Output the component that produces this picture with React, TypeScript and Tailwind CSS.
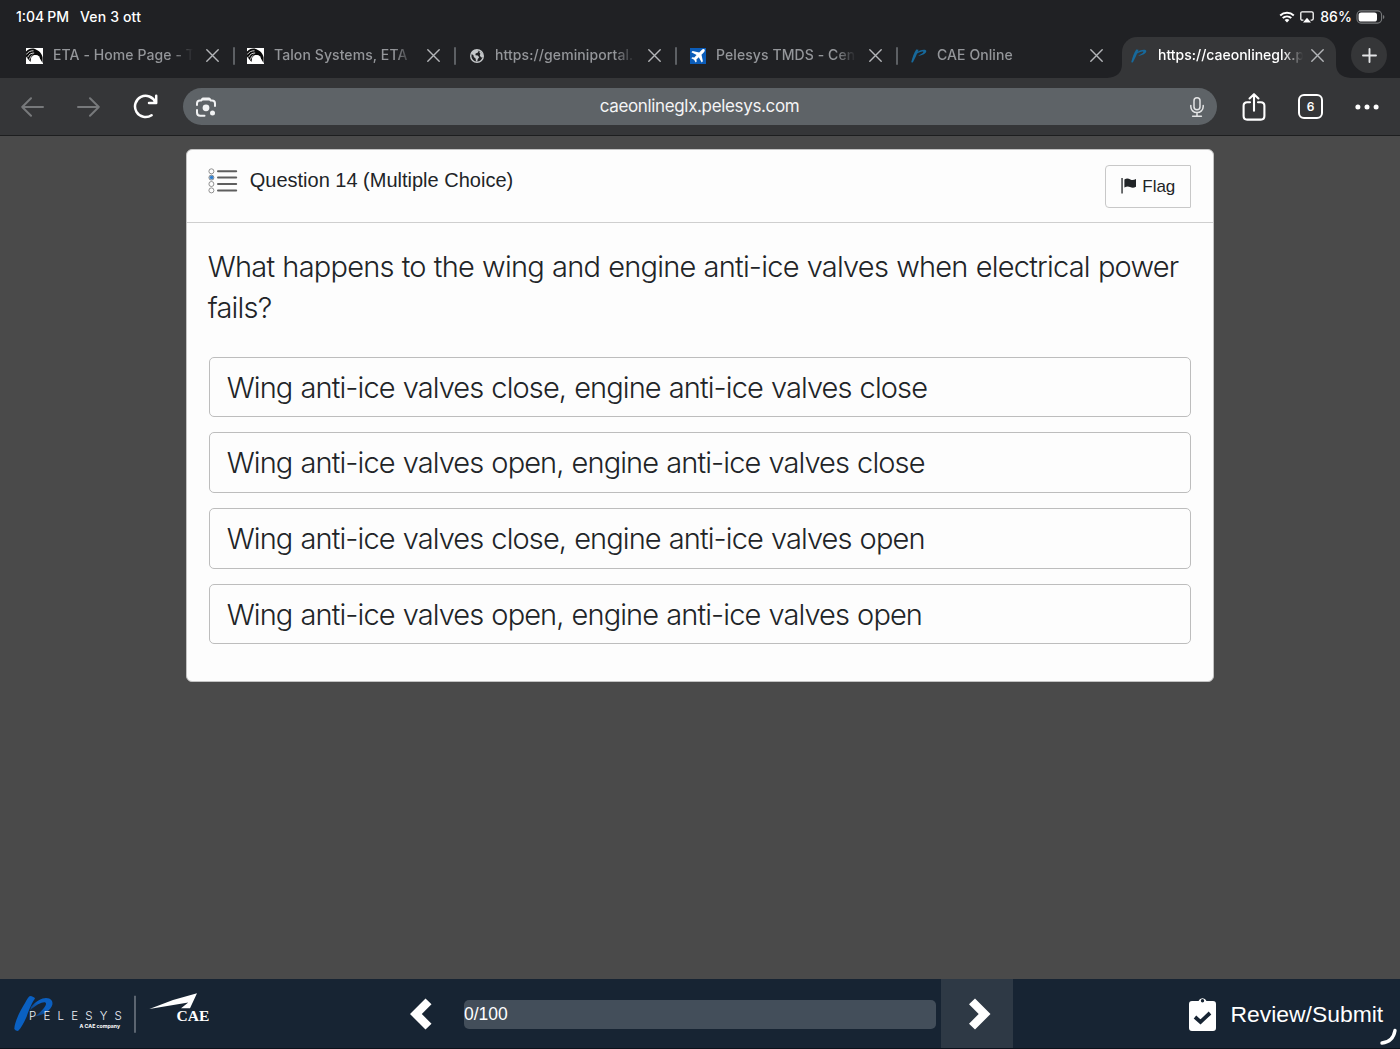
import React from "react";

type Tab = { title: string; icon: string };

const tabs: Tab[] = [
  { title: "ETA - Home Page - T", icon: "talon" },
  { title: "Talon Systems, ETA", icon: "talon" },
  { title: "https://geminiportal.", icon: "globe" },
  { title: "Pelesys TMDS - Cen", icon: "plane" },
  { title: "CAE Online", icon: "pel" },
];

const options = [
  "Wing anti-ice valves close, engine anti-ice valves close",
  "Wing anti-ice valves open, engine anti-ice valves close",
  "Wing anti-ice valves close, engine anti-ice valves open",
  "Wing anti-ice valves open, engine anti-ice valves open",
];

function Favicon({ kind }: { kind: string }) {
  if (kind === "talon")
    return (
      <svg width="17" height="16" viewBox="0 0 17 16" className="shrink-0">
        <rect width="17" height="16" fill="#fff" />
        <path d="M0 3.500C2.500 .8 6 0 9 1C13 2.500 16 5.500 16.600 9.500V15L14.500 11.500L11.500 7.800L8 7L5.200 9.500L4.500 14L2 11L0 8.500Z" fill="#0a0a0a" />
        <path d="M.3 6.500C2 4 4.500 2.600 7.500 2.800M1.600 9.300C3 6.300 5 5 8.200 5M3.500 11.500C4.200 9 5 8 6.500 7" stroke="#efefef" strokeWidth=".9" fill="none" />
        <circle cx="9.800" cy="11.300" r="4.300" fill="#fff" />
      </svg>
    );
  if (kind === "globe")
    return (
      <svg width="16" height="16" viewBox="0 0 16 16" className="shrink-0">
        <circle cx="8" cy="8" r="6.300" fill="#202124" stroke="#c4c7c9" strokeWidth="1.400" />
        <path d="M2.200 5.500C3.200 3 5.500 1.700 8 1.700L9.600 3.200 8.600 4.800 6.600 5.600 6.400 7.200 8.800 7.400 10.200 9.200 8.800 11 8.200 13.400 7 13.200 6.600 10.400 4.800 9 4.600 7.400Z" fill="#c4c7c9" />
        <path d="M11 2.800L14 6.400 14.100 9 12.200 9.600 10.800 7.600 11.400 5.800 10.400 4.600Z" fill="#c4c7c9" />
      </svg>
    );
  if (kind === "plane")
    return (
      <svg width="16" height="16" viewBox="0 0 16 16" className="shrink-0">
        <rect width="16" height="16" fill="#0b5cb8" />
        <path d="M14.500 1.400C13.600.7 12.300 1.300 11.400 2.200L9.200 4.400 2.600 3 1.400 4.200 6.600 7.100 4.300 9.500 2.300 9.200 1.300 10.200 4.100 11.800 5.700 14.600 6.700 13.600 6.400 11.600 8.800 9.300 11.700 14.500 12.900 13.300 11.500 6.700 13.700 4.500C14.600 3.600 15.200 2.200 14.500 1.400Z" fill="#fff" />
      </svg>
    );
  return (
    <svg width="16" height="16" viewBox="0 0 16 16" className="shrink-0">
      <path d="M.2 14.200C1.400 9.500 3 5 5.200 1.600L7.600 1.800C6 6 4 10.500 1.800 14.600Z" fill="#17699b" />
      <path d="M5.500 4.500C8.500 1.500 15.200 .6 15.300 3C15.300 5.400 11.500 7.400 7 8C9.500 6.600 12.500 4.800 12.400 3.800C12.200 3 8.500 3.400 5 6.400Z" fill="#17699b" />
    </svg>
  );
}

function Close() {
  return (
    <svg width="13" height="13" viewBox="0 0 13 13" className="shrink-0" fill="none" stroke="#b3b5b8" strokeWidth="1.400" strokeLinecap="round">
      <path d="M.8.8L12.200 12.200M12.200.8L.8 12.200" />
    </svg>
  );
}

function StatusBar() {
  return (
    <div className="flex h-[33px] items-center justify-between pl-4 pr-[15px] text-[14px] font-medium leading-none text-white">
      <div className="flex gap-[11px]">
        <span>
          1:04<span className="ml-[3px]">PM</span>
        </span>
        <span className="tracking-[0.15px]">Ven 3 ott</span>
      </div>
      <div className="flex items-center">
        <svg width="16" height="12" viewBox="0 0 16 12" fill="none" stroke="#fff" strokeWidth="2">
          <path d="M1.200 4.400C5 .9 11 .9 14.800 4.400M3.700 7.100C6.200 4.900 9.800 4.900 12.300 7.100" />
          <path d="M5.600 8.900C7 7.700 9 7.700 10.400 8.900L8 11.400Z" fill="#fff" stroke="none" />
        </svg>
        <svg width="14" height="12" viewBox="0 0 14 12" className="ml-[5px]">
          <path d="M3.400 9.200H2.200Q.8 9.200.8 7.800V2.200Q.8.8 2.200.8H11.800Q13.200.8 13.200 2.200V7.800Q13.200 9.200 11.800 9.200H10.600" fill="none" stroke="#fff" strokeWidth="1.300" />
          <path d="M7 6.800L11 11.400H3Z" fill="#fff" />
        </svg>
        <span className="ml-[6px] text-[14px] tracking-[0.1px]">86%</span>
        <svg width="29" height="14" viewBox="0 0 29 14" className="ml-1">
          <rect x="1" y=".9" width="24.600" height="12.200" rx="4" fill="none" stroke="#77797b" strokeWidth="1.100" />
          <rect x="2.600" y="2.500" width="18.400" height="9" rx="2.600" fill="#fff" />
          <path d="M27 5V9Q28.400 8.400 28.400 7T27 5Z" fill="#77797b" />
        </svg>
      </div>
    </div>
  );
}

function TabStrip() {
  return (
    <div className="flex h-[45px] items-start pl-[26px]">
      {tabs.map((t, i) => (
        <div key={t.title} className={i === 4 ? "flex h-[45px] w-[212px] shrink-0 items-center" : "flex h-[45px] w-[221px] shrink-0 items-center"}>
          <div className="flex w-[17px] justify-center">
            <Favicon kind={t.icon} />
          </div>
          <span className="ml-[10px] mt-[-2px] w-[143px] whitespace-nowrap text-[14px] font-medium tracking-[0.09px] text-[#94969a] [mask-image:linear-gradient(to_right,black_84%,transparent_98%)]">
            {t.title}
          </span>
          <div className="ml-[10px]">
            <Close />
          </div>
          {i < 4 && <div className="ml-[14px] h-[18px] w-[2px] rounded bg-[#5d6064]" />}
        </div>
      ))}
      <div className="relative mt-[4px] flex h-[41px] w-[214px] shrink-0 items-center rounded-t-[15px] bg-[#353638] pl-[9px]">
        <svg width="16" height="14" viewBox="0 0 16 14" className="absolute bottom-0 left-[-15px]">
          <path d="M16 0V14H0Q15 13 15 0Z" fill="#353638" />
        </svg>
        <svg width="16" height="14" viewBox="0 0 16 14" className="absolute bottom-0 right-[-15px]">
          <path d="M0 0V14H16Q1 13 1 0Z" fill="#353638" />
        </svg>
        <div className="mt-[-4px] flex items-center">
          <Favicon kind="pel" />
          <span className="ml-[11px] mt-[-2px] w-[148px] whitespace-nowrap text-[14px] font-medium tracking-[0px] text-white [mask-image:linear-gradient(to_right,black_84%,transparent_98%)]">
            https://caeonlineglx.p
          </span>
          <div className="ml-[5px]">
            <Close />
          </div>
        </div>
      </div>
      <div className="ml-[15px] mt-[4px] flex size-9 shrink-0 items-center justify-center rounded-full bg-[#353638]">
        <svg width="15" height="15" viewBox="0 0 15 15" stroke="#e3e4e6" strokeWidth="1.900" strokeLinecap="round">
          <path d="M7.500 1V14M1 7.500H14" />
        </svg>
      </div>
    </div>
  );
}

function Toolbar() {
  return (
    <div className="flex h-[58px] items-center border-b border-[#1d1e1f] bg-[#353638] pl-[21px]">
      <svg width="23" height="20" viewBox="0 0 23 20" fill="none" stroke="#77797b" strokeWidth="2" strokeLinecap="round" strokeLinejoin="round">
        <path d="M22 10H1.200M10 1.200L1.200 10L10 18.800" />
      </svg>
      <svg width="23" height="20" viewBox="0 0 23 20" className="ml-[33px]" fill="none" stroke="#77797b" strokeWidth="2" strokeLinecap="round" strokeLinejoin="round">
        <path d="M1 10H21.800M13 1.200L21.800 10L13 18.800" />
      </svg>
      <svg width="25" height="25" viewBox="0 0 25 25" className="ml-[33px]" fill="none" stroke="#fff" strokeWidth="2.500" strokeLinecap="round" strokeLinejoin="round">
        <path d="M18.600 21.200A10.600 10.600 0 1 1 22.400 8.400M23.200 1.800V9H16" />
      </svg>
      <div className="ml-[25px] flex h-[37px] w-[1034px] items-center justify-between rounded-full bg-[#5e6367] px-[13px]">
        <svg width="20" height="20" viewBox="0 0 20 20" fill="none" stroke="#f1f2f3" strokeWidth="2" strokeLinecap="round">
          <path d="M1 8V6.500Q1 3.500 4 3.500H5.200L7 1.400H13L14.800 3.500H16Q19 3.500 19 6.500V9M1 13V15.500Q1 18.800 4.300 18.800H8.500" />
          <path d="M6.600 2.200H13.400" strokeWidth="2.600" />
          <circle cx="10" cy="10.800" r="3.400" fill="#f1f2f3" stroke="none" />
          <circle cx="16.500" cy="16" r="2.500" fill="#f1f2f3" stroke="none" />
        </svg>
        <span className="ml-[-7px] text-[17px] leading-none tracking-[-0.35px] text-[#f4f4f5]">caeonlineglx.pelesys.com</span>
        <svg width="14" height="20" viewBox="0 0 14 20" fill="none" stroke="#e3e4e5" strokeWidth="1.500" strokeLinecap="round">
          <rect x="4" y=".8" width="6" height="12" rx="3" />
          <path d="M.8 8.500V9.500C.8 13 3.500 15.600 7 15.600S13.200 13 13.200 9.500V8.500M7 15.600V19M2.600 19.200H11.400" />
        </svg>
      </div>
      <svg width="24" height="28" viewBox="0 0 24 28" className="ml-[25px]" fill="none" stroke="#fff" strokeWidth="2.100" strokeLinecap="round" strokeLinejoin="round">
        <path d="M8 9.200H5.200Q1.600 9.200 1.600 12.800V23Q1.600 26.600 5.200 26.600H18.800Q22.400 26.600 22.400 23V12.800Q22.400 9.200 18.800 9.200H16M12 17.800V1.400M7.600 5.400L12 1.200L16.400 5.400" />
      </svg>
      <div className="ml-[32px] flex size-[25px] items-center justify-center rounded-[6px] border-2 border-white text-[12px] font-semibold text-white">6</div>
      <svg width="24" height="6" viewBox="0 0 24 6" className="ml-8" fill="#fff">
        <circle cx="2.900" cy="3" r="2.500" />
        <circle cx="12" cy="3" r="2.500" />
        <circle cx="21.100" cy="3" r="2.500" />
      </svg>
    </div>
  );
}

function QuestionCard() {
  return (
    <section className="mx-auto mt-[13px] h-[532.6px] w-[1028.6px] rounded-[6px] border border-[#c3c3c3] bg-[#fdfdfd] text-[#212427]">
      <header className="flex h-[73px] items-start justify-between border-b border-[#cfcfcf] pl-[21px] pr-[22px]">
        <div className="flex pt-[18px]">
          <svg width="30" height="26" viewBox="0 0 30 26" fill="none" stroke="#5e5e5e">
            <path d="M10 3.300H28.200M10 9.600H28.200M10 16H28.200M10 22.400H28.200" strokeWidth="2" strokeLinecap="round" />
            <g strokeWidth=".8" stroke="#777">
              <circle cx="3.400" cy="3.300" r="2.500" />
              <circle cx="3.400" cy="9.600" r="2.500" fill="#a9cdf0" />
              <circle cx="3.400" cy="16" r="2.500" />
              <circle cx="3.400" cy="22.400" r="2.500" />
            </g>
            <circle cx="3.600" cy="9.400" r="1.700" fill="#2f7fd0" stroke="none" />
          </svg>
          <h1 className="ml-[12px] font-['Liberation_Sans',sans-serif] text-[20px] leading-[24px]">Question 14 (Multiple Choice)</h1>
        </div>
        <button className="mt-[14.5px] flex h-[43.5px] w-[86px] items-center justify-center rounded-l-[4px] rounded-r-[1px] border-[1.5px] border-[#c8c8c8] font-['Liberation_Sans',sans-serif] text-[17px]">
          <svg width="16" height="17" viewBox="0 0 16 17" className="mr-[5px]" fill="#212427">
            <rect x=".4" y="0" width="1.300" height="15.500" />
            <path d="M3.400 1.400C6 -.2 7.600 .6 9.400 1.600C11.400 2.600 13 2 15 1V8.800C12.600 10.200 11 10 9 9C7 8 5.600 8.400 3.400 9.600Z" />
          </svg>
          Flag
        </button>
      </header>
      <div className="px-[22px] pt-[22.6px]">
        <p className="ml-[-1px] whitespace-nowrap text-[29px] font-light leading-[41px] tracking-[-0.78px] [word-spacing:0.7px]">
          What happens to the wing and engine anti-ice valves when electrical power
          <br />
          fails?
        </p>
        <div className="mt-[29px] flex flex-col gap-[15px]">
          {options.map((o) => (
            <button key={o} className="flex h-[60.7px] items-center whitespace-nowrap rounded-[5px] border border-[#bdbdbd] pl-[17px] pt-[1px] text-left text-[29px] font-light tracking-[-0.9px] [word-spacing:0.8px]">
              {o}
            </button>
          ))}
        </div>
      </div>
    </section>
  );
}

function Footer() {
  return (
    <footer className="relative flex h-[70px] items-center border-b border-[#0b121b] bg-[#172433] text-white">
      <svg width="215" height="44" viewBox="0 0 215 44" className="shrink-0">
        <defs>
          <linearGradient id="bowl" x1="0" y1="1" x2="1" y2="0">
            <stop offset="0" stopColor="#14325a" />
            <stop offset=".55" stopColor="#0b5fc0" />
          </linearGradient>
        </defs>
        <path d="M31 15C36 9 42 6 46 6C51 6 53 9 52.400 12.500C51 18 44 23 35 24.500C41 20 46.500 14 46 11.500C45.500 8.500 38 11 30 18.500Z" fill="url(#bowl)" />
        <path d="M14.300 37C14.500 30 20 19 25 11Q28 5 30 4Q34 4.500 35 6.500C33 9 29 17 26.700 24.500C24 31 21 36 18 39Q15.500 39 14.300 37Z" fill="#0a60c2" />
        <text x="29" y="28" fontFamily="Inter" fontSize="11.500" fontWeight="300" fill="#eef2f6" letterSpacing="7.200">PELESYS</text>
        <text x="79.500" y="35.500" fontFamily="Inter" fontSize="5.200" fontWeight="700" fill="#fff">A CAE company</text>
        <path d="M135 3.700V40.700" stroke="#8a929b" strokeWidth="1.200" />
        <path d="M149.300 17L173 8L197 1.300L190 16.300H181L188.300 10.500Z" fill="#fff" />
        <text x="176.500" y="29.300" fontFamily="Liberation Serif" fontSize="15.500" fontWeight="700" fill="#fff">CAE</text>
      </svg>
      <svg width="22" height="32" viewBox="0 0 22 32" className="ml-[195px] mt-[1px] shrink-0" fill="#fff">
        <path d="M0 16L15.500 .5L21.500 6.300L11.800 16L21.500 25.700L15.500 31.500Z" />
      </svg>
      <div className="ml-[31.5px] mt-[1px] flex h-[29px] w-[472.5px] items-center rounded-[5px] bg-[#434e5a] pl-[0.5px] pt-[1px] font-['Liberation_Sans',sans-serif] text-[17.5px]">0/100</div>
      <div className="ml-[5px] flex h-full w-[72px] items-center justify-center bg-[#2e3945]">
        <svg width="22" height="32" viewBox="0 0 22 32" fill="#fff" className="ml-[5px] mt-[1px]">
          <path d="M21.500 16L6 .5L0 6.300L9.700 16L0 25.700L6 31.500Z" />
        </svg>
      </div>
      <svg width="27" height="36" viewBox="0 0 27 36" className="ml-[176px] shrink-0">
        <path fillRule="evenodd" d="M3 5H9.500A4.300 4.300 0 0 1 17.500 5H24Q27 5 27 8V32Q27 35 24 35H3Q0 35 0 32V8Q0 5 3 5ZM13.500 3.100A1.700 1.700 0 1 0 13.500 6.500A1.700 1.700 0 1 0 13.500 3.100Z" fill="#fff" />
        <path d="M6 21L11.500 26L21 17" fill="none" stroke="#172433" strokeWidth="3.800" />
      </svg>
      <span className="ml-[14.5px] mt-[1px] font-['Liberation_Sans',sans-serif] text-[22.9px] leading-none">Review/Submit</span>
      <svg width="17" height="17" viewBox="0 0 17 17" className="absolute bottom-[3px] right-[3px]" fill="none" stroke="#fff" strokeWidth="3.400" strokeLinecap="round">
        <path d="M2 15Q13 14 15 2.500" />
      </svg>
    </footer>
  );
}

export default function App() {
  return (
    <div className="flex h-[1049px] w-[1400px] flex-col overflow-hidden bg-[#4a4a4a] font-[Inter,sans-serif]">
      <div className="bg-[#202124]">
        <StatusBar />
        <TabStrip />
        <Toolbar />
      </div>
      <main className="flex-1">
        <QuestionCard />
      </main>
      <Footer />
    </div>
  );
}
